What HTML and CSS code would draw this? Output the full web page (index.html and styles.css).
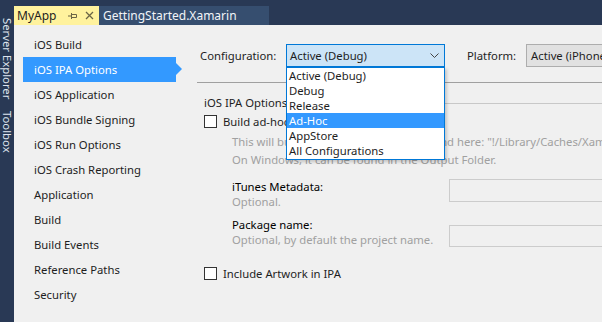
FILE: index.html
```html
<!DOCTYPE html>
<html lang="en">
<head>
  <meta charset="UTF-8" />
  <title>MyApp - iOS IPA Options</title>
  <link rel="stylesheet" href="styles.css">
</head>
<body>

  <div class="ide">
    <div class="toolstrip">
      <span>Server Explorer</span>
      <span>Toolbox</span>
    </div>

    <div class="workspace">
      <div class="tabs">
        <div class="tab active">
          <span class="tab-name">MyApp</span>
          <svg class="tab-icon" width="10" height="8" viewBox="0 0 10 8">
            <path d="M0 4h3M3.5 1v6M3.5 2.5h5v3h-5" fill="none" stroke="#6b6545" stroke-width="1"/>
          </svg>
          <svg class="tab-icon" width="9" height="9" viewBox="0 0 9 9">
            <path d="M1 1l7 7M8 1l-7 7" stroke="#6b6545" stroke-width="1.3"/>
          </svg>
        </div>
        <div class="tab">GettingStarted.Xamarin</div>
      </div>

      <div class="page">
        <ul class="nav">
          <li>iOS Build</li>
          <li class="selected">iOS IPA Options</li>
          <li>iOS Application</li>
          <li>iOS Bundle Signing</li>
          <li>iOS Run Options</li>
          <li>iOS Crash Reporting</li>
          <li>Application</li>
          <li>Build</li>
          <li>Build Events</li>
          <li>Reference Paths</li>
          <li>Security</li>
        </ul>

        <div class="props">
          <div class="config-row">
            <span class="config-label">Configuration:</span>
            <div class="combo">
              <div class="combo-box">
                <span>Active (Debug)</span>
                <svg width="9" height="5" viewBox="0 0 9 5">
                  <path d="M0.5 0.5l4 4 4-4" fill="none" stroke="#444" stroke-width="1"/>
                </svg>
              </div>
              <ul class="combo-list">
                <li>Active (Debug)</li>
                <li>Debug</li>
                <li>Release</li>
                <li class="hover">Ad-Hoc</li>
                <li>AppStore</li>
                <li>All Configurations</li>
              </ul>
            </div>
            <span class="platform-label">Platform:</span>
            <div class="platform-box">Active (iPhone)</div>
          </div>

          <div class="group">
            <div class="group-title"><span>iOS IPA Options</span></div>

            <label class="check-row">
              <span class="checkbox"></span>
              <span>Build ad-hoc/enterprise package (IPA)</span>
            </label>
            <p class="hint">This will build the IPA, which can be found here: "!/Library/Caches/Xamarin/mtbs/builds"<br>On Windows, it can be found in the Output Folder.</p>

            <div class="field">
              <div class="field-text">
                <div class="field-name">iTunes Metadata:</div>
                <div class="field-note">Optional.</div>
              </div>
              <div class="field-box"></div>
            </div>

            <div class="field second">
              <div class="field-text">
                <div class="field-name">Package name:</div>
                <div class="field-note">Optional, by default the project name.</div>
              </div>
              <div class="field-box"></div>
            </div>

            <label class="check-row artwork">
              <span class="checkbox"></span>
              <span>Include Artwork in IPA</span>
            </label>
          </div>
        </div>
      </div>
    </div>
  </div>

</body>
</html>
```

FILE: styles.css
```css
* {
  box-sizing: border-box;
}

:root {
  --frame: #293955;
  --page-bg: #f0f0f0;
  --select: #3399ff;
  --text: #1e1e1e;
  --muted: #a0a0a0;
}

body {
  margin: 0;
  font-family: 'Noto Sans', sans-serif;
  font-size: 11.3px;
  color: var(--text);
  background-color: var(--frame);
  overflow: hidden;
}

ul {
  list-style: none;
  margin: 0;
  padding: 0;
}

.ide {
  display: flex;
  width: 602px;
  height: 322px;
}

/* collapsed tool windows on the left */
.toolstrip {
  width: 14px;
  flex-shrink: 0;
  overflow: hidden;
  display: flex;
  flex-direction: column;
  gap: 12px;
  padding-top: 18px;
  color: #dfe4ee;
}

.toolstrip span {
  writing-mode: vertical-rl;
  margin-left: -6px;
  line-height: 14px;
}

.workspace {
  flex: 1;
  display: flex;
  flex-direction: column;
  min-width: 0;
}

.tabs {
  display: flex;
  height: 25px;
  padding-top: 6px;
}

.tab {
  display: flex;
  align-items: center;
  width: 170px;
  height: 19px;
  padding-left: 4px;
  background-color: #364e6f;
  color: #f2f4f8;
  font-size: 12px;
}

.tab.active {
  width: 85px;
  padding-left: 3px;
  background-color: #fff29d;
  color: #1e1e1e;
}

.tab-icon:first-of-type {
  margin-left: 12px;
}

.tab-icon + .tab-icon {
  margin-left: 7px;
}

.page {
  flex: 1;
  display: flex;
  background-color: var(--page-bg);
  min-height: 0;
}

.nav {
  width: 183px;
  flex-shrink: 0;
  padding: 7px 0 0 9px;
}

.nav li {
  position: relative;
  width: 153px;
  height: 25px;
  line-height: 25px;
  padding-left: 11px;
  white-space: nowrap;
}

.nav li.selected {
  background-color: var(--select);
  color: #fff;
}

.nav li.selected::after {
  content: "";
  position: absolute;
  right: -6px;
  top: 6px;
  border-left: 6px solid var(--select);
  border-top: 6px solid transparent;
  border-bottom: 6px solid transparent;
}

.props {
  flex: 1;
  min-width: 0;
  overflow: hidden;
  position: relative;
}

.config-row {
  display: flex;
  align-items: center;
  padding: 19px 0 15px 3px;
  border-bottom: 1px solid #a0a0a0;
  white-space: nowrap;
}

.config-label {
  width: 86px;
  flex-shrink: 0;
}

.combo {
  position: relative;
  width: 159px;
  flex-shrink: 0;
}

.combo-box {
  display: flex;
  align-items: center;
  justify-content: space-between;
  height: 23px;
  padding: 0 5px 0 3px;
  background-color: #cce4f7;
  border: 1px solid #0078d7;
}

.combo-list {
  position: absolute;
  top: 100%;
  left: 0;
  width: 159px;
  z-index: 5;
  background-color: #fff;
  border: 1px solid #0078d7;
  padding-bottom: 1px;
  box-shadow: 2px 2px 3px rgba(0, 0, 0, 0.18);
}

.combo-list li {
  height: 15px;
  line-height: 15px;
  padding-left: 2px;
}

.combo-list li.hover {
  background-color: var(--select);
  color: #fff;
}

.platform-label {
  width: 59px;
  flex-shrink: 0;
  margin-left: 22px;
}

.platform-box {
  width: 120px;
  flex-shrink: 0;
  height: 23px;
  line-height: 21px;
  padding-left: 4px;
  background-color: #e1e1e1;
  border: 1px solid #adadad;
}

.group {
  padding-left: 7px;
  white-space: nowrap;
}

.group-title {
  display: flex;
  align-items: center;
  margin-top: 11px;
  height: 16px;
}

.group-title::after {
  content: "";
  flex: 1;
  height: 1px;
  margin: 2px 0 0 6px;
  background-color: #c8c8c8;
}

.check-row {
  display: flex;
  align-items: center;
  gap: 6px;
  height: 16px;
  margin-top: 3px;
}

.checkbox {
  width: 13px;
  height: 13px;
  background-color: #fff;
  border: 1px solid #333;
}

.hint {
  margin: 4px 0 0 28px;
  line-height: 18px;
  color: var(--muted);
}

.field {
  display: flex;
  align-items: flex-start;
  margin: 10px 0 0 28px;
}

.field.second {
  margin-top: 8px;
}

.field-text {
  width: 217px;
  flex-shrink: 0;
  line-height: 15px;
}

.field-name {
  color: #000;
}

.field-note {
  color: var(--muted);
}

.field-box {
  width: 200px;
  height: 23px;
  flex-shrink: 0;
  border: 1px solid #cccccc;
}

.field.second .field-box {
  margin-top: 8px;
  height: 22px;
}

.check-row.artwork {
  margin-top: 18px;
}
```
